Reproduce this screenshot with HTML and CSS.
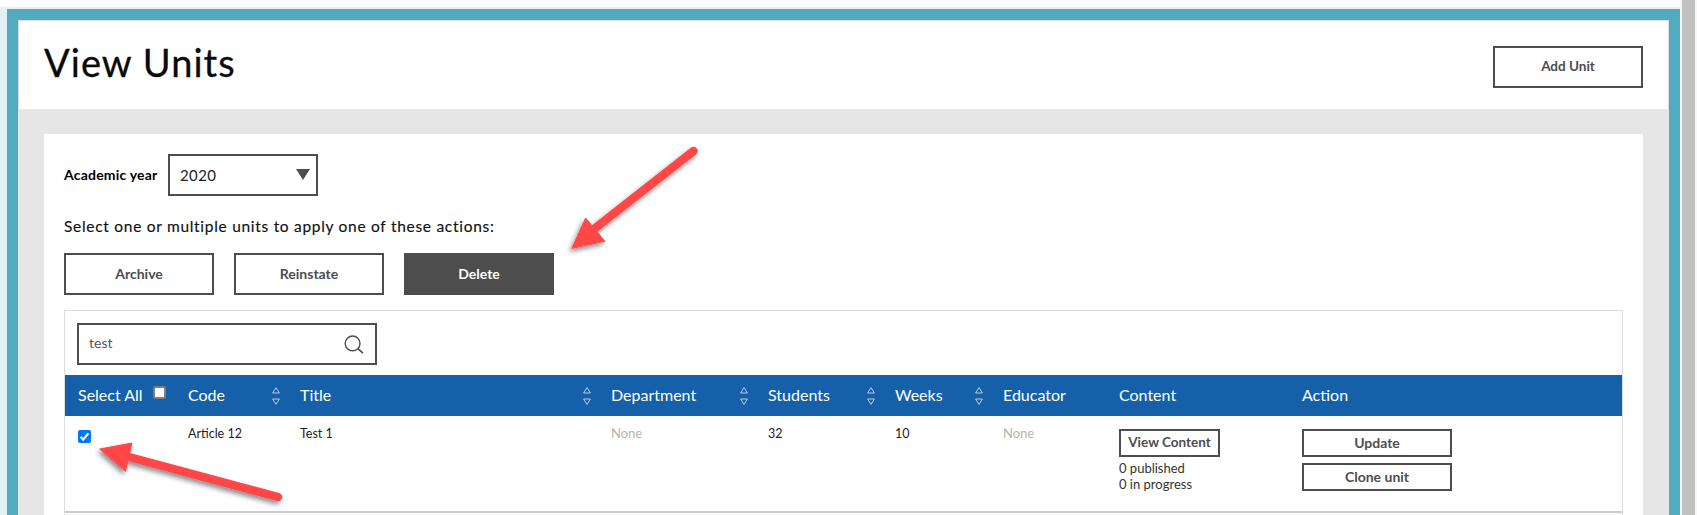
FILE: index.html
```html
<!DOCTYPE html>
<html lang="en">
<head>
<meta charset="utf-8">
<title>View Units</title>
<link rel="stylesheet" href="styles.css">
</head>
<body>
<div class="viewport">
  <div class="edge"></div>
  <div class="frame">
    <header class="page-head">
      <h1>View Units</h1>
      <button class="btn btn-lg">Add Unit</button>
    </header>
    <main class="page-body">
      <section class="card">
        <div class="year-row">
          <label class="year-label">Academic year</label>
          <div class="select"><span>2020</span><i class="caret"></i></div>
        </div>
        <p class="hint">Select one or multiple units to apply one of these actions:</p>
        <div class="actions">
          <button class="btn btn-lg">Archive</button>
          <button class="btn btn-lg">Reinstate</button>
          <button class="btn btn-lg btn-dark">Delete</button>
        </div>
        <div class="table-box">
          <div class="search-wrap">
            <div class="search">
              <span class="search-text">test</span>
              <svg class="search-icon" viewBox="0 0 20 19" width="20" height="19"><circle cx="8.6" cy="8.4" r="7.4" fill="none" stroke="#4d4d4d" stroke-width="1.4"/><path d="M13.8 13.6 19 18.2" fill="none" stroke="#4d4d4d" stroke-width="1.6"/></svg>
            </div>
          </div>
          <div class="grid thead">
            <div class="th th-select">Select All <span class="white-check"></span></div>
            <div class="th">Code<svg class="sort" viewBox="0 0 8 18" width="8" height="18"><path d="M4 .6 7.4 6H.6zM.6 12h6.8L4 17.4z"/></svg></div>
            <div class="th">Title<svg class="sort" viewBox="0 0 8 18" width="8" height="18"><path d="M4 .6 7.4 6H.6zM.6 12h6.8L4 17.4z"/></svg></div>
            <div class="th">Department<svg class="sort" viewBox="0 0 8 18" width="8" height="18"><path d="M4 .6 7.4 6H.6zM.6 12h6.8L4 17.4z"/></svg></div>
            <div class="th">Students<svg class="sort" viewBox="0 0 8 18" width="8" height="18"><path d="M4 .6 7.4 6H.6zM.6 12h6.8L4 17.4z"/></svg></div>
            <div class="th">Weeks<svg class="sort" viewBox="0 0 8 18" width="8" height="18"><path d="M4 .6 7.4 6H.6zM.6 12h6.8L4 17.4z"/></svg></div>
            <div class="th">Educator</div>
            <div class="th">Content</div>
            <div class="th">Action</div>
          </div>
          <div class="grid tbody">
            <div class="td"><span class="blue-check"><svg viewBox="0 0 13 13" width="13" height="13"><path d="M2.6 6.8 5.2 9.6 10.4 3.4" fill="none" stroke="#fff" stroke-width="2.2"/></svg></span></div>
            <div class="td">Article 12</div>
            <div class="td">Test 1</div>
            <div class="td muted">None</div>
            <div class="td">32</div>
            <div class="td">10</div>
            <div class="td muted">None</div>
            <div class="td">
              <button class="btn btn-sm btn-fit">View Content</button>
              <div class="counts">0 published<br>0 in progress</div>
            </div>
            <div class="td">
              <div class="row-actions">
                <button class="btn btn-sm btn-wide">Update</button>
                <button class="btn btn-sm btn-wide">Clone unit</button>
              </div>
            </div>
          </div>
          <div class="next-row"></div>
        </div>
      </section>
    </main>
  </div>
  <div class="gutter"></div>
  <div class="scrollbar"></div>
  <div class="gutter"></div>
</div>
<svg class="annotations" width="1697" height="515" viewBox="0 0 1697 515">
  <defs>
    <filter id="arrow-shadow" x="-30%" y="-30%" width="160%" height="160%">
      <feDropShadow dx="-2" dy="3" stdDeviation="2.5" flood-color="#000" flood-opacity=".45"/>
    </filter>
  </defs>
  <g fill="#ff4747" stroke="#ff4747" stroke-linecap="round" filter="url(#arrow-shadow)">
    <path d="M693.5 151 594 229" fill="none" stroke-width="8.5"/>
    <path d="M572 248 585.6 218 604.7 241z" stroke-width="1"/>
    <path d="M278 497 129 457" fill="none" stroke-width="8.5"/>
    <path d="M100 449 132 443 125.5 471z" stroke-width="1"/>
  </g>
</svg>
</body>
</html>
```
FILE: styles.css
```css
* { box-sizing: border-box; }
html, body { margin: 0; padding: 0; height: 515px; overflow: hidden; background: #fff; }
body { font-family: Lato, "Liberation Sans", sans-serif; color: #000; position: relative; }

.viewport { display: flex; width: 1697px; height: 515px; }
.edge { width: 7px; margin-top: 9px; background: #e3f1f6; box-shadow: 0 -2px 0 #eee; flex: none; }
.frame {
  width: 1673px; margin-top: 9px; flex: none;
  background: #e6e6e6; border: solid #50acbe; border-width: 11px 11px 0 11px;
  display: flex; flex-direction: column;
  box-shadow: 0 -2px 0 #eee;
}
.gutter { width: 2px; background: #f6f6f6; flex: none; }
.scrollbar { width: 13px; background: #c1c1c1; flex: none; }

.page-head {
  height: 89px; background: #fff; display: flex; justify-content: space-between;
  padding: 21px 25px 0 25px; flex: none;
  border: solid #dcdcdc; border-width: 1px 1px 0 1px;
}
h1 { margin: 0; font-size: 38px; line-height: 40px; font-weight: 400; letter-spacing: 1.05px; color: #0a0a0a; -webkit-text-stroke: .3px #0a0a0a; }
.page-head .btn { margin-top: 4px; font-size: 13.5px; }

.page-body { padding: 25px 26px 0 26px; flex: 1; min-height: 0; }
.card { background: #fff; height: 100%; padding: 20px 20px 0 20px; }

.btn {
  font: 700 14px/1 Lato, "Liberation Sans", sans-serif; color: #4d4d4d;
  background: #fff; border: 2px solid #4d4d4d; border-radius: 0; padding: 0; display: block;
}
.btn-lg { width: 150px; height: 42px; }
.btn-dark { background: #4d4d4d; color: #fff; }
.btn-sm { height: 28px; }
.btn-fit { width: 101px; font-size: 13.5px; }
.btn-wide { width: 150px; }

.year-row { display: flex; align-items: center; height: 42px; }
.year-label { font-size: 14px; font-weight: 700; width: 104px; margin-top: -2px; letter-spacing: .2px; }
.select {
  width: 150px; height: 42px; border: 2px solid #4d4d4d; display: flex; align-items: center;
  justify-content: space-between; padding: 0 6px 0 10px; font-size: 15px; color: #222; letter-spacing: .4px;
}
.caret {
  width: 0; height: 0; border-style: solid; border-width: 11px 7px 0 7px;
  border-color: #4d4d4d transparent transparent transparent; margin-top: -1px;
}
.hint { margin: 20px 0 0; font-size: 15.5px; line-height: 20px; letter-spacing: .71px; color: #111; -webkit-text-stroke: .15px #111; }
.actions { display: flex; gap: 20px; margin-top: 17px; }

.table-box {
  margin-top: 15px; width: 1559px; height: 205px; border: 1px solid #ddd; border-bottom: 0;
}
.search-wrap { padding: 12px 12px 10px; height: 64px; }
.search {
  width: 300px; height: 42px; border: 2px solid #4d4d4d; display: flex; align-items: center;
  justify-content: space-between; padding: 0 11px 0 10px; font-size: 14px; color: #555;
}
.search-text { margin-top: -4px; }
.grid { display: grid; grid-template-columns: 110px 112px 311px 157px 127px 108px 116px 183px 1fr; }
.thead { height: 41px; background: #1660a9; color: #fff; font-size: 16px; }
.th { display: flex; align-items: center; justify-content: space-between; padding: 0 7px 2px 13px; }
.th .sort { margin-top: 2px; }
.th-select { justify-content: flex-start; gap: 10px; padding-bottom: 3px; }
.th:nth-child(n+7) { justify-content: flex-start; }
.white-check { width: 13px; height: 13px; background: #fff; border: 2px solid #7d7d7d; border-radius: 2px; margin-top: -3px; flex: none; }
.sort { fill: none; stroke: #c6d8ea; stroke-width: .9; flex: none; }

.tbody { height: 97px; border-bottom: 2px solid #ccc; font-size: 12.5px; color: #222; }
.td { padding: 10px 0 0 13px; line-height: 16px; }
.tbody .muted { color: #b9b5ad; font-size: 13px; padding-top: 9px; }
.tbody .td:nth-child(n+8) { padding-top: 13px; }
.tbody .td:first-child { padding-top: 14px; }
.blue-check { display: block; width: 13px; height: 13px; background: #0075ff; border-radius: 2px; }
.blue-check svg { display: block; }
.counts { margin-top: 3px; font-size: 13px; color: #333; }
.row-actions { display: flex; flex-direction: column; gap: 6px; }
.next-row { height: 10px; background: #f8f8f8; }

.annotations { position: absolute; left: 0; top: 0; pointer-events: none; }
```
